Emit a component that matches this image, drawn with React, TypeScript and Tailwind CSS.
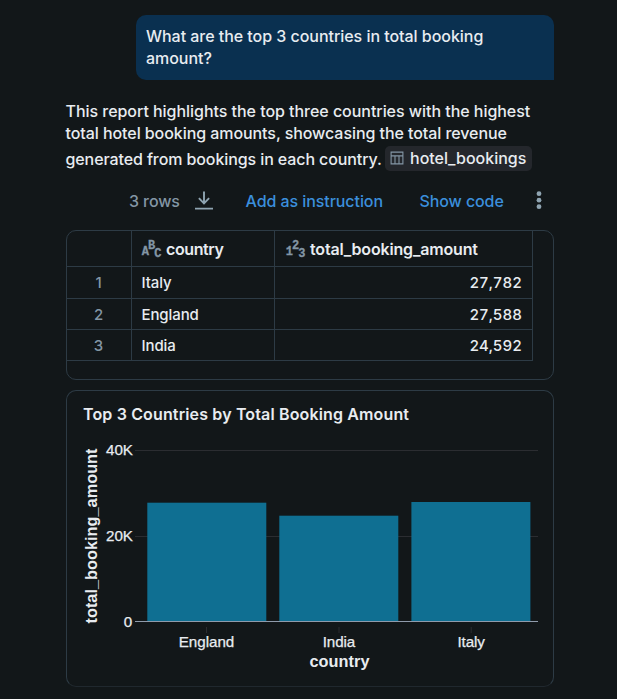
import React from "react";

const rows = [
  { country: "Italy", amount: "27,782", size: "h-[32px]" },
  { country: "England", amount: "27,588", size: "h-[31px] pt-px" },
  { country: "India", amount: "24,592", size: "h-[31px] pt-px" },
];

const bars = [
  { label: "England", x: 80.3, y: 111.7, center: 139.5, width: 55.5 },
  { label: "India", x: 212.3, y: 124.7, center: 272, width: 32.5 },
  { label: "Italy", x: 344.4, y: 111, center: 404.2, width: 27.5 },
];

function TableIcon() {
  return (
    <svg width="14" height="14" viewBox="0 0 14 14" fill="none" stroke="#8396a5" strokeWidth="1.1">
      <path d="M1.1 1.1h11.8v11.8H1.1zM1.1 4.9h11.8M5 4.9v8M9 4.9v8" />
    </svg>
  );
}

function DownloadIcon() {
  return (
    <svg width="20" height="20" viewBox="0 0 20 20" fill="none" stroke="#8fa4b1" strokeWidth="1.9">
      <path d="M10 .5V12M4.9 7.2 10 12.3l5.1-5.1M1 17.6h18" />
    </svg>
  );
}

function TypeIcon({ a, b, c }: { a: string; b: string; c: string }) {
  return (
    <svg
      width="20"
      height="20"
      viewBox="0 0 20 20"
      fill="#8396a5"
      stroke="#8396a5"
      strokeWidth="0.3"
      className="overflow-visible font-['Liberation_Mono',monospace] text-[12px] font-bold"
    >
      <text x="-0.2" y="16">{a}</text>
      <text x="6" y="10">{b}</text>
      <text x="12.2" y="17.5">{c}</text>
    </svg>
  );
}

function Chart() {
  return (
    <svg width="486" height="295" viewBox="0 0 486 295" className="block font-['Liberation_Sans',Arial,sans-serif]">
      <text x="16" y="29" fill="#e8ecf0" textLength="326" className="font-['Inter',sans-serif] text-[16px] font-semibold">
        Top 3 Countries by Total Booking Amount
      </text>
      <path d="M68 59.5H471M68 145.5H471" stroke="#2b2d31" />
      {bars.map((bar) => (
        <g key={bar.label}>
          <rect x={bar.x} y={bar.y} width="119" height={230.5 - bar.y} fill="#0f6f92" />
          <path d={`M${bar.center} 236v6`} stroke="#2b2d31" />
          <text
            x={bar.center}
            y="256"
            textAnchor="middle"
            textLength={bar.width}
            fill="#e8ecf0"
            stroke="#e8ecf0"
            strokeWidth="0.25"
            fontSize="15.2"
          >
            {bar.label}
          </text>
        </g>
      ))}
      <path d="M68 230.5H471" stroke="#8f9bab" />
      <g fill="#e8ecf0" stroke="#e8ecf0" strokeWidth="0.25" fontSize="15.2" textAnchor="end">
        <text x="66" y="64" textLength="27">40K</text>
        <text x="66" y="150" textLength="27">20K</text>
        <text x="65.3" y="236">0</text>
      </g>
      <g fill="#e8ecf0" fontSize="16.3" fontWeight="700" textAnchor="middle">
        <text x="272.5" y="276" textLength="60">country</text>
        <text transform="translate(30 145) rotate(-90)" textLength="175">total_booking_amount</text>
      </g>
    </svg>
  );
}

export default function App() {
  return (
    <main className="h-[699px] w-[617px] overflow-hidden bg-[#121719] pl-[66px] pt-[15px] font-['Inter',sans-serif] text-[16px] font-[450] leading-[22px] text-[#e8ecf0]">
      <div className="flex w-[488px] flex-col">
        <div className="ml-[70px] h-[65px] rounded-[10px] rounded-br-none bg-[#0a3050] px-[10px] pt-[10px] tracking-[-0.04px]">
          <p className="whitespace-nowrap">
            What are the top 3 countries in total booking
            <br />
            amount?
          </p>
        </div>

        <div className="-ml-[0.5px] mt-[20px] whitespace-nowrap">
          <p className="tracking-[-0.04px]">This report highlights the top three countries with the highest</p>
          <p className="tracking-[-0.07px]">total hotel booking amounts, showcasing the total revenue</p>
          <div className="flex h-[28px] items-center">
            <span className="mt-px w-[319.5px] tracking-[-0.1px]">generated from bookings in each country.</span>
            <span className="flex h-[25px] w-[147px] items-center gap-[6px] rounded-[5px] bg-[#24272c] pl-[5px]">
              <TableIcon />
              <span>hotel_bookings</span>
            </span>
          </div>
        </div>

        <div className="mt-[15px] flex h-[28px] items-center whitespace-nowrap">
          <span className="ml-[63px] w-[65px] tracking-[-0.1px] text-[#8396a5]">3 rows</span>
          <DownloadIcon />
          <span className="ml-[31.5px] w-[174px] tracking-[-0.07px] text-[#3b8fdc]">Add as instruction</span>
          <span className="w-[115.5px] tracking-[-0.1px] text-[#3b8fdc]">Show code</span>
          <svg width="8" height="20" viewBox="0 0 8 20" fill="#8fa4b1">
            <circle cx="4" cy="2.7" r="2.4" />
            <circle cx="4" cy="9.2" r="2.4" />
            <circle cx="4" cy="15.7" r="2.4" />
          </svg>
        </div>

        <section className="mt-[15px] h-[150px] rounded-[10px] border border-[#2d3b45]">
          <div className="flex h-[36px] w-[466px] border-b border-r border-[#2d3b45] font-semibold">
            <div className="w-[65px] border-r border-[#2d3b45]" />
            <div className="flex w-[143px] items-center gap-[4px] border-r border-[#2d3b45] pl-[10px]">
              <TypeIcon a="A" b="B" c="C" />
              <span className="tracking-[-0.4px]">country</span>
            </div>
            <div className="flex items-center gap-[4px] pl-[11px]">
              <TypeIcon a="1" b="2" c="3" />
              <span className="tracking-[-0.17px]">total_booking_amount</span>
            </div>
          </div>
          {rows.map((row, i) => (
            <div key={row.country} className={`flex w-[466px] border-b border-r border-[#2d3b45] text-[15px] ${row.size}`}>
              <div className="-mt-px flex w-[65px] items-center justify-center border-r border-[#2d3b45] pr-px pt-px text-[#8396a5]">
                {i + 1}
              </div>
              <div className="-mt-px flex w-[143px] items-center border-r border-[#2d3b45] pl-[9.5px] pt-px tracking-[-0.1px]">
                {row.country}
              </div>
              <div className="flex flex-1 items-center justify-end pr-[10px] tabular-nums">{row.amount}</div>
            </div>
          ))}
        </section>

        <section className="mt-[10px] h-[297px] rounded-[10px] border border-[#2d3b45] border-b-[#20282e]">
          <Chart />
        </section>
      </div>
    </main>
  );
}
